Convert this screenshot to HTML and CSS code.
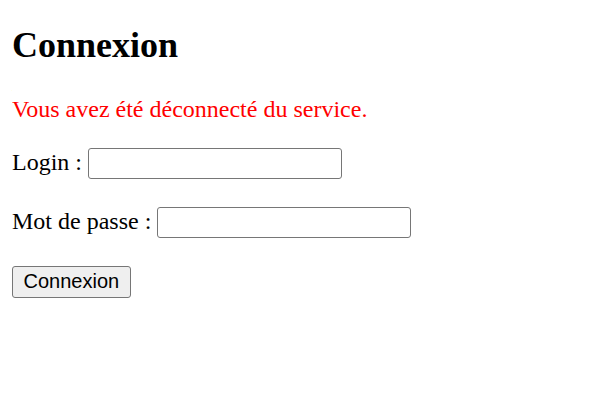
FILE: index.html
```html
<!DOCTYPE html>
<html lang="fr">
<head>
<meta charset="utf-8">
<title>Connexion</title>
<link rel="stylesheet" href="styles.css">
</head>
<body class="page">
<h2 class="title">Connexion</h2>
<p class="msg">Vous avez été déconnecté du service.</p>
<form class="form">
<p class="row">Login : <input class="field" type="text"></p>
<p class="row">Mot de passe : <input class="field" type="password"></p>
<p class="row"><button class="btn" type="button">Connexion</button></p>
</form>
</body>
</html>
```

FILE: styles.css
```css
html, body { background: #fff; }
.page {
  margin: 12px;
  font-family: "Liberation Serif", "Times New Roman", serif;
  font-size: 24px;
  color: #000;
}
.title {
  font-size: 36px;
  font-weight: bold;
  margin: 12px 0 29.88px;
}
.msg {
  color: #ff0000;
  margin: 24px 0;
}
.form { margin: 0; }
.row {
  margin: 25px 0 24px;
  padding-bottom: 3px;
}
.field {
  box-sizing: border-box;
  width: 254px;
  height: 31px;
  padding: 1.5px 3px;
  border: 1px solid #767676;
  border-radius: 3px;
  font-family: "Liberation Sans", Arial, sans-serif;
  font-size: 20px;
  background: #fff;
  vertical-align: baseline;
}
.btn {
  box-sizing: border-box;
  height: 32px;
  padding: 0 10.5px;
  border: 1px solid #767676;
  border-radius: 3px;
  background: #efefef;
  color: #000;
  font-family: "Liberation Sans", Arial, sans-serif;
  font-size: 20px;
}
```
